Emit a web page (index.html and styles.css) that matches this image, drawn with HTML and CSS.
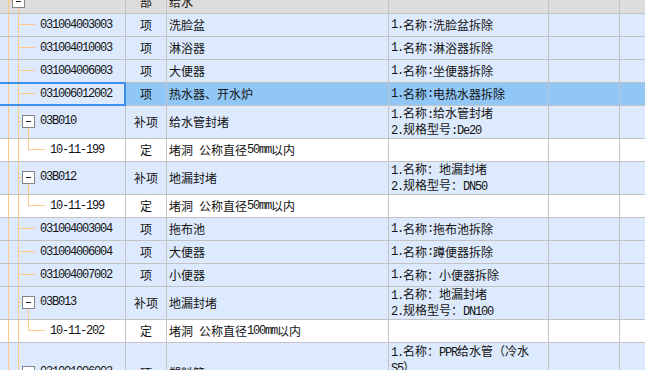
FILE: index.html
```html
<!DOCTYPE html>
<html lang="zh-CN">
<head>
<meta charset="utf-8">
<link rel="stylesheet" href="styles.css">
</head>
<body>
<div class="grid">
  <div class="row gray">
    <div class="c c1 t-top"><span class="box"></span></div>
    <div class="c c2">部</div>
    <div class="c c3">给水</div>
    <div class="c c4"></div>
    <div class="c c5"></div>
    <div class="c c6"></div>
  </div>
  <div class="row blue">
    <div class="c c1 t-leaf"><span class="m">031004003003</span></div>
    <div class="c c2">项</div>
    <div class="c c3">洗脸盆</div>
    <div class="c c4"><span class="m">1.</span>名称<span class="m">:</span>洗脸盆拆除</div>
    <div class="c c5"></div>
    <div class="c c6"></div>
  </div>
  <div class="row blue">
    <div class="c c1 t-leaf"><span class="m">031004010003</span></div>
    <div class="c c2">项</div>
    <div class="c c3">淋浴器</div>
    <div class="c c4"><span class="m">1.</span>名称<span class="m">:</span>淋浴器拆除</div>
    <div class="c c5"></div>
    <div class="c c6"></div>
  </div>
  <div class="row blue">
    <div class="c c1 t-leaf"><span class="m">031004006003</span></div>
    <div class="c c2">项</div>
    <div class="c c3">大便器</div>
    <div class="c c4"><span class="m">1.</span>名称<span class="m">:</span>坐便器拆除</div>
    <div class="c c5"></div>
    <div class="c c6"></div>
  </div>
  <div class="row sel">
    <div class="c c1 t-leaf"><span class="m">031006012002</span></div>
    <div class="c c2">项</div>
    <div class="c c3">热水器、开水炉</div>
    <div class="c c4"><span class="m">1.</span>名称<span class="m">:</span>电热水器拆除</div>
    <div class="c c5"></div>
    <div class="c c6"></div>
  </div>
  <div class="row blue h2">
    <div class="c c1 t-node"><span class="box"></span><span class="m lbl">03B010</span></div>
    <div class="c c2">补项</div>
    <div class="c c3">给水管封堵</div>
    <div class="c c4"><div class="lines"><span class="m">1.</span>名称<span class="m">:</span>给水管封堵<br><span class="m">2.</span>规格型号<span class="m">:De20</span></div></div>
    <div class="c c5"></div>
    <div class="c c6"></div>
  </div>
  <div class="row white">
    <div class="c c1 t-child"><span class="m">10-11-199</span></div>
    <div class="c c2">定</div>
    <div class="c c3">堵洞<span class="sp"></span>公称直径<span class="m">50mm</span>以内</div>
    <div class="c c4"></div>
    <div class="c c5"></div>
    <div class="c c6"></div>
  </div>
  <div class="row blue h2">
    <div class="c c1 t-node"><span class="box"></span><span class="m lbl">03B012</span></div>
    <div class="c c2">补项</div>
    <div class="c c3">地漏封堵</div>
    <div class="c c4"><div class="lines"><span class="m">1.</span>名称：地漏封堵<br><span class="m">2.</span>规格型号：<span class="m">DN50</span></div></div>
    <div class="c c5"></div>
    <div class="c c6"></div>
  </div>
  <div class="row white">
    <div class="c c1 t-child"><span class="m">10-11-199</span></div>
    <div class="c c2">定</div>
    <div class="c c3">堵洞<span class="sp"></span>公称直径<span class="m">50mm</span>以内</div>
    <div class="c c4"></div>
    <div class="c c5"></div>
    <div class="c c6"></div>
  </div>
  <div class="row blue">
    <div class="c c1 t-leaf"><span class="m">031004003004</span></div>
    <div class="c c2">项</div>
    <div class="c c3">拖布池</div>
    <div class="c c4"><span class="m">1.</span>名称<span class="m">:</span>拖布池拆除</div>
    <div class="c c5"></div>
    <div class="c c6"></div>
  </div>
  <div class="row blue">
    <div class="c c1 t-leaf"><span class="m">031004006004</span></div>
    <div class="c c2">项</div>
    <div class="c c3">大便器</div>
    <div class="c c4"><span class="m">1.</span>名称<span class="m">:</span>蹲便器拆除</div>
    <div class="c c5"></div>
    <div class="c c6"></div>
  </div>
  <div class="row blue">
    <div class="c c1 t-leaf"><span class="m">031004007002</span></div>
    <div class="c c2">项</div>
    <div class="c c3">小便器</div>
    <div class="c c4"><span class="m">1.</span>名称：小便器拆除</div>
    <div class="c c5"></div>
    <div class="c c6"></div>
  </div>
  <div class="row blue h2">
    <div class="c c1 t-node"><span class="box"></span><span class="m lbl">03B013</span></div>
    <div class="c c2">补项</div>
    <div class="c c3">地漏封堵</div>
    <div class="c c4"><div class="lines"><span class="m">1.</span>名称：地漏封堵<br><span class="m">2.</span>规格型号：<span class="m">DN100</span></div></div>
    <div class="c c5"></div>
    <div class="c c6"></div>
  </div>
  <div class="row white">
    <div class="c c1 t-child"><span class="m">10-11-202</span></div>
    <div class="c c2">定</div>
    <div class="c c3">堵洞<span class="sp"></span>公称直径<span class="m">100mm</span>以内</div>
    <div class="c c4"></div>
    <div class="c c5"></div>
    <div class="c c6"></div>
  </div>
  <div class="row blue h4">
    <div class="c c1 t-node4"><span class="box"></span><span class="m lbl">031001006003</span></div>
    <div class="c c2">项</div>
    <div class="c c3">塑料管</div>
    <div class="c c4 top"><div class="lines"><span class="m">1.</span>名称：<span class="m">PPR</span>给水管（冷水<br><span class="m">S5</span>）<br><span class="m">2.</span>规格型号：<span class="m">De25</span><br><span class="m">3.</span>连接方式：热熔</div></div>
    <div class="c c5"></div>
    <div class="c c6"></div>
  </div>
</div>
</body>
</html>
```

FILE: styles.css
```css
:root {
  --line: #c3c3c3;
  --org: linear-gradient(#fdc986, #fdc986);
}

html, body {
  margin: 0;
  padding: 0;
}

body {
  width: 645px;
  height: 370px;
  overflow: hidden;
  background: #ffffff;
  font-family: "Noto Sans CJK SC", "Noto Sans", sans-serif;
  font-size: 12px;
  color: #141414;
}

.grid {
  margin-top: -9px;
}

.row {
  display: grid;
  grid-template-columns: 126px 41px 222px 160px 71px 1fr;
  height: 23px;
  box-sizing: border-box;
  border-bottom: 1px solid var(--line);
}

.row.h2 { height: 33px; }
.row.h4 { height: 61px; }

.gray { background: #dddddd; }
.blue { background: #dde9fc; }
.white { background: #ffffff; }
.sel { background: #91c7f6; }

.c {
  box-sizing: border-box;
  border-right: 1px solid var(--line);
  display: flex;
  align-items: center;
  padding-left: 2px;
  overflow: hidden;
  white-space: nowrap;
  line-height: 14px;
}

.c6 { border-right: none; }
.c2 { justify-content: center; padding-left: 0; }
.c4.top { align-items: flex-start; padding-top: 1px; }

.m {
  font-family: "Liberation Mono", monospace;
  letter-spacing: -1.2px;
}

.sp {
  display: inline-block;
  width: 6px;
}

.lines { line-height: 14px; }

/* tree column */
.c1 {
  padding-left: 0;
  background-repeat: no-repeat;
}

.sel .c1 {
  background-color: #dde9fc;
  position: relative;
  overflow: visible;
}

.sel .c1::after {
  content: "";
  position: absolute;
  left: 0;
  right: -1px;
  top: -1px;
  bottom: -1px;
  border: 2px solid #3d8fea;
  border-left: none;
}

.box {
  box-sizing: border-box;
  width: 13px;
  height: 13px;
  border: 1px solid #858585;
  background: #ffffff linear-gradient(#2a2a2a, #2a2a2a) 3px 5px / 5px 1px no-repeat;
  flex: none;
}

.lbl { margin-left: 5px; line-height: 13px; }

.t-top {
  align-items: flex-start;
  padding-top: 4px;
  padding-left: 12px;
  background-image: var(--org), var(--org), var(--org);
  background-position: 8px 0, 8px 10px, 18px 17px;
  background-size: 1px 100%, 4px 1px, 1px 100%;
}

.t-leaf {
  padding-left: 40px;
  background-image: var(--org), var(--org), var(--org);
  background-position: 8px 0, 18px 0, 18px 10px;
  background-size: 1px 100%, 1px 100%, 17px 1px;
}

.t-node {
  align-items: flex-start;
  padding-top: 9px;
  padding-left: 22px;
  background-image: var(--org), var(--org), var(--org), var(--org);
  background-position: 8px 0, 18px 0, 18px 15px, 28px 22px;
  background-size: 1px 100%, 1px 100%, 4px 1px, 1px 100%;
}

.t-node4 {
  align-items: flex-start;
  padding-top: 23px;
  padding-left: 22px;
  background-image: var(--org), var(--org), var(--org), var(--org);
  background-position: 8px 0, 18px 0, 18px 29px, 28px 36px;
  background-size: 1px 100%, 1px 100%, 4px 1px, 1px 100%;
}

.t-child {
  padding-left: 50px;
  background-image: var(--org), var(--org), var(--org), var(--org);
  background-position: 8px 0, 18px 0, 28px 0, 28px 10px;
  background-size: 1px 100%, 1px 100%, 1px 11px, 17px 1px;
}
```
